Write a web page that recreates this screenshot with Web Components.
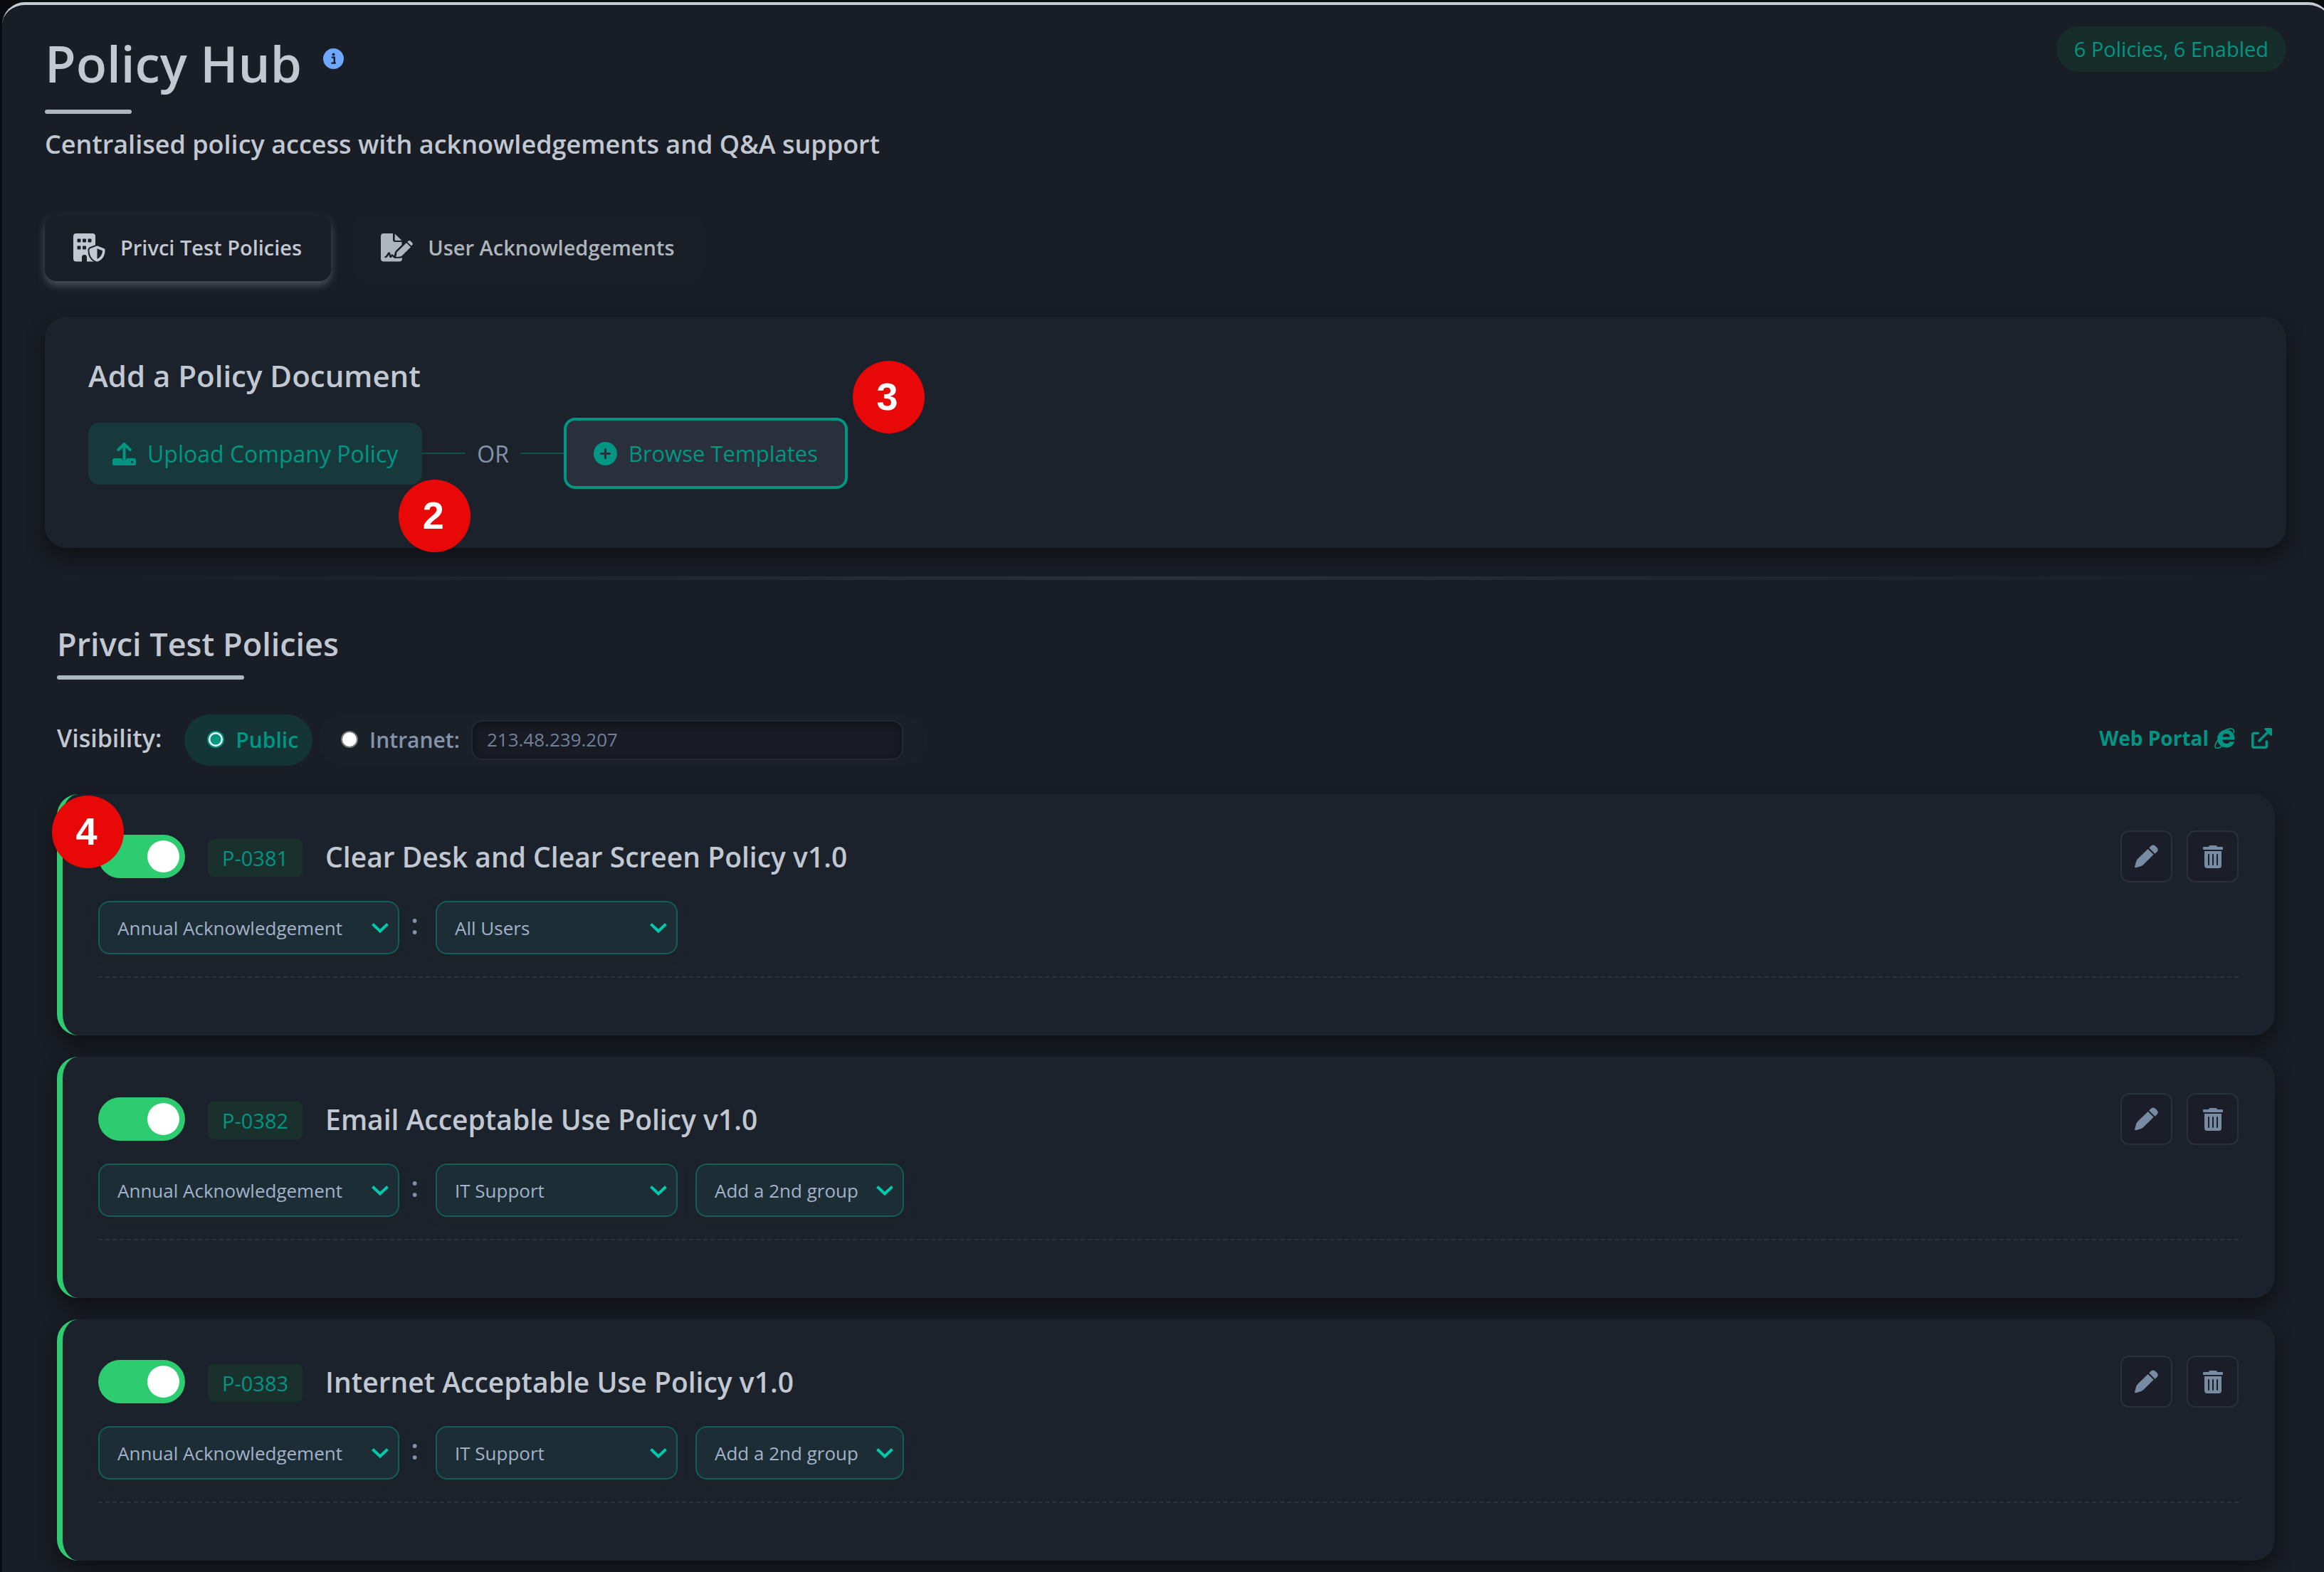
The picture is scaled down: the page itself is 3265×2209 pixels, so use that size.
<!DOCTYPE html>
<html lang="en">
<head>
<meta charset="utf-8">
<title>Policy Hub</title>
<style>
  html {
    background: #0a0b0f;
  }
  body {
    margin: 0;
    overflow: hidden;
    font-family: "Open Sans", "Noto Sans", sans-serif;
    color: #c1c8d2;
    --teal: #009683;
    --panel: #191d25;
    --card: #1c222b;
    --muted: #8493ab;
  }
</style>
</head>
<body>

<hub-panel>
  <hub-header heading="Policy Hub" status="6 Policies, 6 Enabled">
    Centralised policy access with acknowledgements and Q&amp;A support
  </hub-header>

  <hub-tabs>
    <hub-tab icon="building" active>Privci Test Policies</hub-tab>
    <hub-tab icon="signature">User Acknowledgements</hub-tab>
  </hub-tabs>

  <add-policy heading="Add a Policy Document">
    <step-marker slot="upload-step">2</step-marker>
    <step-marker slot="browse-step">3</step-marker>
  </add-policy>

  <hub-divider></hub-divider>

  <policy-section heading="Privci Test Policies">
    <visibility-bar address="213.48.239.207"></visibility-bar>
    <policy-card code="P-0381" heading="Clear Desk and Clear Screen Policy v1.0" group="All Users">
      <step-marker slot="step">4</step-marker>
    </policy-card>
    <policy-card code="P-0382" heading="Email Acceptable Use Policy v1.0" group="IT Support" extra="Add a 2nd group"></policy-card>
    <policy-card code="P-0383" heading="Internet Acceptable Use Policy v1.0" group="IT Support" extra="Add a 2nd group"></policy-card>
  </policy-section>
</hub-panel>

<script>
const ICONS = {
  info: ['0 0 29 29', `
    <circle cx="14.5" cy="14.5" r="14.5" fill="currentColor"/>
    <circle cx="14.5" cy="8.6" r="2" fill="#191d25"/>
    <path d="M11.8 12.6h4v7.2M11.4 20.6h6.4" fill="none" stroke="#191d25" stroke-width="2.4"/>`],
  building: ['0 0 45 40', `
    <path fill="currentColor" fill-rule="evenodd" d="M4 0h23a4 4 0 0 1 4 4v35.500h-12v-6a3.500 3.500 0 0 0-7 0v6H4a4 4 0 0 1-4-4V4a4 4 0 0 1 4-4z
      M6.500 7.500a1 1 0 0 0-1 1v3a1 1 0 0 0 1 1h3a1 1 0 0 0 1-1v-3a1 1 0 0 0-1-1z
      M14 7.500a1 1 0 0 0-1 1v3a1 1 0 0 0 1 1h3a1 1 0 0 0 1-1v-3a1 1 0 0 0-1-1z
      M21.500 7.500a1 1 0 0 0-1 1v3a1 1 0 0 0 1 1h3a1 1 0 0 0 1-1v-3a1 1 0 0 0-1-1z
      M6.500 17.500a1 1 0 0 0-1 1v3a1 1 0 0 0 1 1h3a1 1 0 0 0 1-1v-3a1 1 0 0 0-1-1z
      M14 17.500a1 1 0 0 0-1 1v3a1 1 0 0 0 1 1h3a1 1 0 0 0 1-1v-3a1 1 0 0 0-1-1z"/>
    <path fill="currentColor" stroke="#1a1e26" stroke-width="4" paint-order="stroke" d="M32.500 17.800q1-.4 2 0l8.800 3.400q1.300.6 1.300 2c0 7-3 13.300-10.100 16.200q-1 .4-2 0C25.400 36.500 22.400 30.200 22.400 23.200q0-1.400 1.300-2z"/>
    <path fill="#1a1e26" d="M33.500 21.300l7.500 2.900c-.3 5-2.700 9.300-7.500 11.700z"/>`],
  signature: ['0 0 45 40', `
    <path fill="currentColor" d="M4 0h13v9a3 3 0 0 0 3 3h9.500v4L21 24.500q-1 1.200-1.400 3L18 34.500h12v1a4 4 0 0 1-4 4H4a4 4 0 0 1-4-4V4a4 4 0 0 1 4-4z"/>
    <path fill="currentColor" d="M19.700.4v8.800q0 .8.800.8h9z"/>
    <path fill="none" stroke="#1a1e26" stroke-width="2.400" stroke-linejoin="round" stroke-linecap="round" d="M6.500 33.200c3 0 3.500-5.800 5-5.800 1.300 0 .8 5.600 2.200 5.600 1.200 0 1.200-2.600 2.300-2.600s1.200 2.800 3.500 2.800h8"/>
    <path fill="currentColor" stroke="#1a1e26" stroke-width="3" paint-order="stroke" d="M36 13.200l6 6L28.800 32.200l-7.300 1 1-6.800z"/>
    <path fill="currentColor" d="M37.300 11.900l1.500-1.500q1.400-1 2.800.2l2.600 2.600q1.300 1.400.2 2.800l-1.500 1.500z"/>`],
  upload: ['0 0 33 33', `
    <path fill="currentColor" fill-rule="evenodd" d="M3 23h9.500a4.200 4.200 0 0 0 8 0H30a3 3 0 0 1 3 3v4.500a3 3 0 0 1-3 3H3a3 3 0 0 1-3-3V26a3 3 0 0 1 3-3zM27.500 26.600a1.600 1.600 0 1 0 .1 0z"/>
    <path fill="none" stroke="currentColor" stroke-width="4" stroke-linecap="round" stroke-linejoin="round" d="M16.500 24V2.800M8.300 11l8.200-8.200 8.200 8.200"/>`],
  plus: ['0 0 33 33', `
    <circle cx="16.500" cy="16.500" r="16.500" fill="currentColor"/>
    <path stroke="#2a303b" stroke-width="3" stroke-linecap="round" d="M16.500 10.500v12M10.500 16.500h12"/>`],
  explorer: ['0 0 29 29', `
    <path fill="currentColor" fill-rule="evenodd" d="M16.500 2.500C24 2.500 29 8.500 28.600 16.600H11.300c.3 3.300 2.600 5.300 5.500 5.300 2.300 0 3.900-.9 4.800-2.600h6.500C26.400 24.600 22.300 27.600 16.700 27.600 9.600 27.600 4.300 22.500 4.300 15.300 4.300 8 9.600 2.500 16.500 2.500zM11.400 12.600h10.500c-.3-3-2.400-4.800-5.200-4.800s-4.900 1.900-5.300 4.800z"/>
    <path fill="none" stroke="currentColor" stroke-width="1.700" d="M4.500 13C8 7.500 15 1.500 22.500.9c4.500-.2 5.800 2.600 4.600 6.600M5 16.500C.8 22.500-.2 27.500 2.600 28.200c2 .5 5-.6 7.500-2.200"/>`],
  external: ['0 0 29 29', `
    <path fill="none" stroke="currentColor" stroke-width="3.600" stroke-linecap="round" stroke-linejoin="round" d="M9.500 7.300H3.800a2 2 0 0 0-2 2v16a2 2 0 0 0 2 2h15.700a2 2 0 0 0 2-2V19M11 18L24 5"/>
    <path fill="currentColor" d="M19 0h8.500A1.500 1.500 0 0 1 29 1.500V10q-.6 1.500-2 .7L18.300 2q-.6-1.400.7-2z"/>`],
  pencil: ['0 0 33 33', `
    <path fill="currentColor" d="M18.600 6l8 7.800L12.300 28q-1.300 1.300-3 1.900l-7.400 2.300q-2 .3-1.800-1.500l2.100-7.500q.6-1.800 2-3.200z
      M20.200 4.400l2.700-2.700q3-2.600 6 0l2.400 2.400q2.800 3 .1 5.800l-2.900 2.800z"/>`],
  trash: ['0 0 28 32', `
    <path fill="currentColor" d="M10 0h8q1 0 1.500 1l.5 1h6.500a2 2 0 0 1 0 4h-25a2 2 0 0 1 0-4H8l.5-1Q9 0 10 0z"/>
    <path fill="currentColor" fill-rule="evenodd" d="M2 8h24v20a4 4 0 0 1-4 4H6a4 4 0 0 1-4-4zM7 13v14a1 1 0 0 0 2 0V13a1 1 0 0 0-2 0zM13 13v14a1 1 0 0 0 2 0V13a1 1 0 0 0-2 0zM19 13v14a1 1 0 0 0 2 0V13a1 1 0 0 0-2 0z"/>`],
  chevron: ['0 0 24 14', `
    <path fill="none" stroke="currentColor" stroke-width="4" d="M1.500 1.500L12 11.500l10.500-10"/>`]
};

const icon = (name) => {
  const [box, body] = ICONS[name];
  const [, , w, h] = box.split(' ');
  return `<svg viewBox="${box}" width="${w}" height="${h}" aria-hidden="true">${body}</svg>`;
};

class HubPanel extends HTMLElement {
  constructor() {
    super();
    this.attachShadow({ mode: 'open' }).innerHTML = `
    <style>
      /* the panel runs a little past the right edge of the window */
      :host {
        display: block;
        margin: 3px -10px 0 3px;
        padding: 30px 63px 40px 60px;
        border-top: 4px solid #c1cad2;
        border-radius: 32px 32px 0 0;
        background: var(--panel);
      }
    </style>
    <slot></slot>`;
  }
}

class HubHeader extends HTMLElement {
  constructor() {
    super();
    this.attachShadow({ mode: 'open' }).innerHTML = `
    <style>
      :host { display: block; }
      .top {
        display: flex;
        justify-content: space-between;
        align-items: flex-start;
      }
      .title {
        display: flex;
        align-items: flex-start;
        gap: 30px;
      }
      h1 {
        margin: 0;
        font-size: 71px;
        line-height: 104px;
        font-weight: 600;
      }
      .title svg {
        margin-top: 31px;
        color: #6ea8fe;
      }
      .status {
        padding: 0 25px;
        border-radius: 32px;
        background: #172d2a;
        color: var(--teal);
        font-size: 29px;
        line-height: 64px;
      }
      .rule {
        width: 122px;
        height: 6px;
        margin-top: 13px;
        border-radius: 3px;
        background: #adb5bd;
      }
      p {
        margin: 19px 0 0;
        font-size: 36px;
        line-height: 48px;
        font-weight: 600;
      }
    </style>
    <div class="top">
      <div class="title"><h1>${this.getAttribute('heading')}</h1>${icon('info')}</div>
      <span class="status">${this.getAttribute('status')}</span>
    </div>
    <div class="rule"></div>
    <p><slot></slot></p>`;
  }
}

class HubTabs extends HTMLElement {
  constructor() {
    super();
    this.attachShadow({ mode: 'open' }).innerHTML = `
    <style>
      :host {
        display: flex;
        gap: 30px;
        margin-top: 75px;
      }
    </style>
    <slot></slot>`;
  }
}

class HubTab extends HTMLElement {
  constructor() {
    super();
    this.attachShadow({ mode: 'open' }).innerHTML = `
    <style>
      :host { display: block; }
      button {
        display: flex;
        align-items: center;
        gap: 21px;
        height: 93px;
        padding: 0 41px 2px 40px;
        border: 0;
        border-radius: 16px;
        background: #1a1e26;
        color: #adb5bd;
        font: 600 29px "Open Sans", "Noto Sans", sans-serif;
      }
      :host([active]) button {
        color: #c1c8d2;
        box-shadow: 0 6px 12px #4d515b;
      }
    </style>
    <button type="button">${icon(this.getAttribute('icon'))}<slot></slot></button>`;
  }
}

class AddPolicy extends HTMLElement {
  constructor() {
    super();
    this.attachShadow({ mode: 'open' }).innerHTML = `
    <style>
      :host {
        display: block;
        margin-top: 50px;
        padding: 55px 61px 83px;
        border-radius: 30px;
        background: var(--card);
        box-shadow: 0 12px 24px #0f1115;
      }
      h2 {
        margin: 0;
        font-size: 42px;
        line-height: 56px;
        font-weight: 600;
      }
      .actions {
        display: flex;
        align-items: center;
        margin-top: 31px;
      }
      .action { position: relative; }
      button {
        display: flex;
        align-items: center;
        gap: 16px;
        height: 87px;
        padding: 0 34px;
        border: 0;
        border-radius: 16px;
        background: #17393b;
        color: var(--teal);
        font: 400 32px "Open Sans", "Noto Sans", sans-serif;
      }
      .browse {
        height: 100px;
        padding: 0 38px;
        border: 4px solid var(--teal);
        background: #2a303b;
        font-size: 31px;
      }
      .or {
        display: flex;
        align-items: center;
        gap: 16px;
        color: var(--muted);
        font-size: 32px;
      }
      .or::before, .or::after {
        content: "";
        width: 61px;
        height: 2px;
        background: #115047;
      }
      ::slotted(step-marker) { position: absolute; }
      ::slotted([slot="upload-step"]) { top: 80px; right: -68px; }
      ::slotted([slot="browse-step"]) { top: -80px; right: -108px; }
    </style>
    <h2>${this.getAttribute('heading')}</h2>
    <div class="actions">
      <div class="action">
        <button type="button">${icon('upload')}Upload Company Policy</button>
        <slot name="upload-step"></slot>
      </div>
      <span class="or">OR</span>
      <div class="action">
        <button type="button" class="browse">${icon('plus')}Browse Templates</button>
        <slot name="browse-step"></slot>
      </div>
    </div>`;
  }
}

class StepMarker extends HTMLElement {
  constructor() {
    super();
    this.attachShadow({ mode: 'open' }).innerHTML = `
    <style>
      :host {
        display: block;
        box-sizing: border-box;
        width: 101px;
        height: 102px;
        padding-right: 4px;
        border-radius: 50%;
        background: #e90808;
        color: #fff;
        font: bold 54px/100px "Liberation Sans", Arial, sans-serif;
        text-align: center;
      }
    </style>
    <slot></slot>`;
  }
}

class HubDivider extends HTMLElement {
  constructor() {
    super();
    this.attachShadow({ mode: 'open' }).innerHTML = `
    <style>
      :host {
        display: block;
        height: 5px;
        margin-top: 40px;
        background: linear-gradient(90deg, transparent, #2a2f38, transparent);
      }
    </style>`;
  }
}

class PolicySection extends HTMLElement {
  constructor() {
    super();
    this.attachShadow({ mode: 'open' }).innerHTML = `
    <style>
      :host {
        display: flex;
        flex-direction: column;
        gap: 30px;
        padding: 60px 16px 0 17px;
      }
      h2 {
        align-self: flex-start;
        margin: 0 0 19px;
        font-size: 45px;
        line-height: 60px;
        font-weight: 600;
      }
      h2::after {
        content: "";
        display: block;
        width: 263px;
        height: 6px;
        margin-top: 14px;
        border-radius: 3px;
        background: #adb5bd;
      }
    </style>
    <h2>${this.getAttribute('heading')}</h2>
    <slot></slot>`;
  }
}

class VisibilityBar extends HTMLElement {
  constructor() {
    super();
    this.attachShadow({ mode: 'open' }).innerHTML = `
    <style>
      :host {
        display: flex;
        justify-content: space-between;
        align-items: center;
        margin-bottom: 10px;
      }
      fieldset {
        display: flex;
        align-items: center;
        margin: 0;
        padding: 0;
        border: 0;
      }
      .name {
        margin-right: 32px;
        padding-bottom: 6px;
        font-size: 34px;
        line-height: 48px;
        font-weight: 600;
      }
      .choice {
        display: flex;
        align-items: center;
        height: 72px;
        padding: 0 20px 0 32px;
        border-radius: 36px;
        font-size: 30px;
        font-weight: 600;
      }
      .choice label {
        display: flex;
        align-items: center;
        gap: 16px;
        padding-bottom: 2px;
      }
      .public {
        margin-right: 8px;
        background: #143435;
        color: var(--teal);
      }
      .intranet {
        padding-right: 34px;
        background: #1a2027;
        color: var(--muted);
      }
      input[type="radio"] {
        appearance: none;
        width: 24px;
        height: 24px;
        margin: 0;
        border: 2px solid #767676;
        border-radius: 50%;
        background: #fff;
      }
      input[type="radio"]:checked {
        border-color: var(--teal);
        background: radial-gradient(circle, var(--teal) 7px, #fff 8px);
      }
      input[type="text"] {
        box-sizing: border-box;
        width: 607px;
        height: 56px;
        margin: 0 0 0 16px;
        padding: 0 20px 2px;
        border: 2px solid #232833;
        border-radius: 16px;
        background: #181b23;
        box-shadow: inset 0 3px 8px #0f1116;
        color: #71809a;
        font: 400 26px "Open Sans", "Noto Sans", sans-serif;
      }
      a {
        display: flex;
        align-items: center;
        margin-right: 4px;
        padding-bottom: 6px;
        color: var(--teal);
        font-size: 28px;
        font-weight: 700;
        text-decoration: none;
      }
      a svg:first-of-type { margin: 0 23px 0 8px; }
    </style>
    <fieldset aria-label="Visibility">
      <span class="name">Visibility:</span>
      <span class="choice public">
        <label><input type="radio" name="visibility" checked>Public</label>
      </span>
      <span class="choice intranet">
        <label><input type="radio" name="visibility">Intranet:</label>
        <input type="text" aria-label="Intranet address" value="${this.getAttribute('address')}">
      </span>
    </fieldset>
    <a href="#portal">Web Portal${icon('explorer')}${icon('external')}</a>`;
  }
}

class SelectBox extends HTMLElement {
  constructor() {
    super();
    this.attachShadow({ mode: 'open' }).innerHTML = `
    <style>
      :host {
        display: grid;
        align-items: center;
      }
      select, svg { grid-area: 1 / 1; }
      select {
        appearance: none;
        box-sizing: border-box;
        width: 100%;
        height: 75px;
        margin: 0;
        padding: 0 25px;
        border: 2px solid #135e59;
        border-radius: 16px;
        background: #1c2d35;
        box-shadow: 0 4px 12px #1e212a;
        color: #a3b1c9;
        font: 400 26px "Open Sans", "Noto Sans", sans-serif;
      }
      svg {
        justify-self: end;
        margin-right: 15px;
        color: #00c9ad;
        pointer-events: none;
      }
    </style>
    <select aria-label="${this.getAttribute('label')}">
      <option>${this.getAttribute('value')}</option>
    </select>
    ${icon('chevron')}`;
  }
}

class ToggleSwitch extends HTMLElement {
  constructor() {
    super();
    this.attachShadow({ mode: 'open' }).innerHTML = `
    <style>
      :host { display: block; }
      input {
        appearance: none;
        display: flex;
        align-items: center;
        justify-content: flex-end;
        box-sizing: border-box;
        width: 122px;
        height: 61px;
        margin: 0;
        padding: 0 8px;
        border-radius: 31px;
        background: #2ecc71;
      }
      input::before {
        content: "";
        width: 45px;
        height: 45px;
        border-radius: 50%;
        background: #fff;
      }
    </style>
    <input type="checkbox" role="switch" aria-label="${this.getAttribute('label')}" checked>`;
  }
}

class PolicyCard extends HTMLElement {
  constructor() {
    super();
    const heading = this.getAttribute('heading');
    const extra = this.getAttribute('extra');
    this.attachShadow({ mode: 'open' }).innerHTML = `
    <style>
      :host {
        display: block;
        position: relative;
        padding: 51px 51px 81px 50px;
        border-left: 8px solid #2ecc71;
        border-radius: 30px;
        background: var(--card);
        box-shadow: 0 12px 24px #0f1115;
      }
      .head {
        display: flex;
        align-items: center;
        gap: 32px;
      }
      .code {
        margin-top: 4px;
        padding: 0 20px;
        border-radius: 8px;
        background: #1a302d;
        color: var(--teal);
        font-size: 29px;
        line-height: 53px;
      }
      h3 {
        flex: 1;
        margin: 0;
        font-size: 39px;
        line-height: 52px;
        font-weight: 600;
      }
      .tools {
        display: flex;
        gap: 20px;
      }
      .tools button {
        display: grid;
        place-items: center;
        width: 73px;
        height: 73px;
        padding: 0;
        border: 2px solid #29313a;
        border-radius: 12px;
        background: #1b1e28;
        color: #778ba3;
      }
      .groups {
        display: flex;
        align-items: center;
        padding: 26px 0 31px;
        border-bottom: 2px dashed #2b323c;
      }
      .schedule { width: 423px; }
      .colon {
        box-sizing: border-box;
        width: 51px;
        padding: 0 8px 12px 0;
        color: var(--muted);
        font-size: 39px;
        line-height: 52px;
        font-weight: 600;
        text-align: center;
      }
      .group { width: 340px; }
      .extra {
        width: 293px;
        margin-left: 25px;
      }
      ::slotted(step-marker) {
        position: absolute;
        top: 2px;
        left: -15px;
      }
    </style>
    <div class="head">
      <toggle-switch label="${heading}"></toggle-switch>
      <span class="code">${this.getAttribute('code')}</span>
      <h3>${heading}</h3>
      <div class="tools">
        <button type="button" aria-label="Edit">${icon('pencil')}</button>
        <button type="button" aria-label="Delete">${icon('trash')}</button>
      </div>
    </div>
    <div class="groups">
      <select-box class="schedule" label="Schedule" value="Annual Acknowledgement"></select-box>
      <span class="colon">:</span>
      <select-box class="group" label="Group" value="${this.getAttribute('group')}"></select-box>
      ${extra ? `<select-box class="extra" label="Second group" value="${extra}"></select-box>` : ''}
    </div>
    <slot name="step"></slot>`;
  }
}

customElements.define('hub-panel', HubPanel);
customElements.define('hub-header', HubHeader);
customElements.define('hub-tabs', HubTabs);
customElements.define('hub-tab', HubTab);
customElements.define('add-policy', AddPolicy);
customElements.define('step-marker', StepMarker);
customElements.define('hub-divider', HubDivider);
customElements.define('policy-section', PolicySection);
customElements.define('visibility-bar', VisibilityBar);
customElements.define('select-box', SelectBox);
customElements.define('toggle-switch', ToggleSwitch);
customElements.define('policy-card', PolicyCard);
</script>
</body>
</html>
